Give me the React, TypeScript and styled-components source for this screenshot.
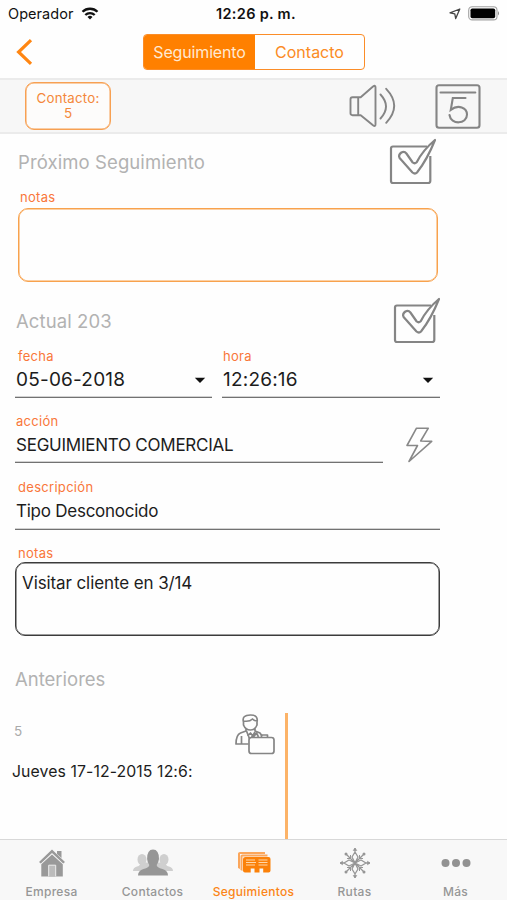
import React from "react";
import styled, { createGlobalStyle } from "styled-components";

const Global = createGlobalStyle`
  * { box-sizing: border-box; }
  body { margin: 0; background: #fff; font-family: Inter, Roboto, sans-serif; }
  button { font: inherit; border: 0; background: none; padding: 0; }
`;

const Screen = styled.div`
  width: 507px; height: 900px; display: flex; flex-direction: column;
  background: #fefefe; overflow: hidden; color: #1c1c1c;
`;

const Txt = styled.span<{ $s: number; $ls?: number; $w?: number; $c?: string }>`
  font-size: ${(p) => p.$s}px;
  letter-spacing: ${(p) => p.$ls ?? 0}px;
  font-weight: ${(p) => p.$w ?? 400};
  color: ${(p) => p.$c ?? "inherit"};
  line-height: 20px;
  white-space: nowrap;
`;

const StatusBar = styled.div`
  height: 27px; display: grid; grid-template-columns: 1fr auto 1fr;
  align-items: center; padding: 0 7px 0 12px; color: #111;
`;
const StatusSide = styled.div<{ $end?: boolean }>`
  display: flex; align-items: center; gap: ${(p) => (p.$end ? 7 : 8)}px;
  margin-left: ${(p) => (p.$end ? 0 : -4)}px;
  justify-content: ${(p) => (p.$end ? "flex-end" : "flex-start")};
`;

const NavBar = styled.nav`
  height: 51px; display: flex; align-items: center; padding-left: 15px;
`;
const BackButton = styled.button`
  width: 128px; height: 32px; display: flex;
`;
const Segmented = styled.div`
  display: flex; width: 222px; height: 36px; margin-bottom: 1px;
  border: 1px solid #fb8d28; border-radius: 4px; overflow: hidden;
`;
const Segment = styled.button<{ $active?: boolean }>`
  width: ${(p) => (p.$active ? 111 : 109)}px; padding-bottom: 1px;
  color: ${(p) => (p.$active ? "#ffe9d2" : "#fb8b24")};
  background: ${(p) => (p.$active ? "#ff8000" : "transparent")};
`;

const Toolbar = styled.div`
  height: 56px; display: flex; align-items: center;
  border-top: 2px solid #ebebeb; border-bottom: 2px solid #ebebeb;
  background: #f7f7f7; padding: 0 26px 0 25px;
`;
const ContactBadge = styled.button`
  width: 86px; height: 48px; border: 1px solid #f7a052; border-radius: 9px;
  box-shadow: inset 0 0 0 0.5px #f7a052;
  background: #fdfcfb; color: #f4883a; margin-right: auto;
  display: flex; flex-direction: column; align-items: center; justify-content: center;
  span { line-height: 15.5px; }
`;
const ToolIcons = styled.div`
  display: flex; align-items: center; gap: 39px;
`;

const Content = styled.main`
  flex: 1; display: flex; flex-direction: column; min-height: 0;
`;
const HeadingRow = styled.div<{ $h: number; $top: number; $left: number; $right: number }>`
  height: ${(p) => p.$h}px; display: flex; align-items: center; justify-content: space-between;
  padding: ${(p) => p.$top}px ${(p) => p.$right}px 0 ${(p) => p.$left}px;
`;
const Label = styled.label<{ $indent?: number; $h?: number }>`
  display: block; height: ${(p) => p.$h ?? 20}px; line-height: 20px;
  font-size: 13px; letter-spacing: 0.3px; flex: none;
  color: #f9773a; padding-left: ${(p) => p.$indent ?? 0}px;
`;
const Notes = styled.div<{ $dark?: boolean }>`
  width: ${(p) => (p.$dark ? 425 : 420)}px; height: 74px; flex: none;
  margin-left: ${(p) => (p.$dark ? 15 : 18)}px;
  border: 1px solid ${(p) => (p.$dark ? "#3c3c3c" : "#f8a24d")};
  box-shadow: inset 0 0 0 0.5px ${(p) => (p.$dark ? "#3c3c3c" : "#f8a24d")};
  border-radius: 10px; padding: 10px 6px;
`;
const FieldRow = styled.div<{ $h: number; $top?: number }>`
  height: ${(p) => p.$h}px; display: flex; gap: 10px; flex: none;
  padding: ${(p) => p.$top ?? 0}px 0 0 15px;
`;
const Field = styled.div<{ $w: number }>`
  width: ${(p) => p.$w}px; display: flex; flex-direction: column;
  border-bottom: 1px solid #727272;
  box-shadow: inset 0 -1px 0 #d2d2d2;
`;
const FieldValue = styled.div`
  display: flex; align-items: center; justify-content: space-between;
  height: 20px; margin-top: 4px; padding: 0 6px 0 1px;
`;
const BoltSlot = styled.div`
  padding: 16px 0 0 12px;
`;
const NotesLabelRow = styled.div`
  padding-top: 13px;
`;
const History = styled.section`
  flex: 1; display: flex;
`;
const HistoryEntry = styled.div`
  width: 288px; border-right: 3px solid #fcb368; display: flex; flex-direction: column;
`;
const HistoryTop = styled.div`
  height: 48px; display: flex; justify-content: space-between; padding: 0 9px 0 14px;
`;
const HistoryNumber = styled.div` padding-top: 7px; `;
const HistoryDate = styled.div` padding-left: 12px; `;

const TabBar = styled.footer`
  height: 61px; border-top: 1px solid #d8d8d8; background: #f8f8f8;
  display: grid; grid-template-columns: 101px 101px 101px 101px 101px; padding-left: 1px;
`;
const Tab = styled.button<{ $active?: boolean }>`
  display: flex; flex-direction: column; align-items: center;
  color: ${(p) => (p.$active ? "#fb8517" : "#969696")};
  padding-top: 5px;
  svg { display: block; height: 36px; flex: none; }
  span { margin-top: 1px; }
`;

const GREY = "#858585";

const Wifi = () => (
  <svg width="18" height="13" viewBox="0 0 17 13" fill="none" stroke="#111" strokeWidth="2.3">
    <path d="M1 4.8a10.7 10.7 0 0 1 15 0" />
    <path d="M3.8 8a6.7 6.7 0 0 1 9.4 0" />
    <path d="M8.5 12.6l-2.5-2.6a3.6 3.6 0 0 1 5 0z" fill="#111" stroke="none" />
  </svg>
);
const Arrow = () => (
  <svg width="12" height="12" viewBox="0 0 12 12" fill="none" stroke="#444" strokeWidth="1.3" strokeLinejoin="round">
    <path d="M10.8 1L1 4.8l4.8 1.1.9 4.7z" />
  </svg>
);
const Battery = () => (
  <svg width="32" height="15" viewBox="0 0 32 15">
    <rect x=".7" y=".7" width="28.3" height="13.2" rx="3.5" fill="none" stroke="#a2a2a2" strokeWidth="1.1" />
    <rect x="2.5" y="2.4" width="24.7" height="9.8" rx="1.8" fill="#000" />
    <path d="M30 5v4.6q2-2.3 0-4.6" fill="#888" />
  </svg>
);
const Back = () => (
  <svg width="20" height="30" viewBox="0 0 20 30" fill="none" stroke="#ff8612" strokeWidth="3.2">
    <path d="M16 3.2L3.6 15 16 26.800" />
  </svg>
);
const Speaker = () => (
  <svg width="47" height="44" viewBox="0 0 47 44" fill="none" stroke={GREY} strokeWidth="1.9" strokeLinecap="round" strokeLinejoin="round">
    <path d="M3.500 13.200h8.200L24 2.500q2.500-1.800 2.500.8v37q0 2.800-2.500 1L11.700 31.200H3.500q-2 0-2-2v-14q0-2 2-2zM9.200 13.200v18" />
    <path d="M31.500 10.500q11 12 0 24M37.200 4.800q16 17 0 34" />
  </svg>
);
const Calendar = () => (
  <svg width="46" height="45" viewBox="0 0 46 45" fill="none" stroke={GREY} strokeWidth="2.1" strokeLinecap="round">
    <rect x="1.500" y="1.200" width="43" height="42.500" rx="2.500" />
    <path d="M5.500 8.500h34.800M30.500 14H17.800l-2 11.800c7.500-5.800 16.200-2 16.200 4.700 0 10.200-16.200 10.500-17.500.5" />
  </svg>
);
const Check = () => (
  <svg width="48" height="47" viewBox="0 0 48 47" fill="none" stroke={GREY} strokeWidth="2.200" strokeLinejoin="round">
    <path d="M38 8.500H4q-2 0-2 2V43q0 2 2 2h35q2.300 0 2.300-2V18" />
    <path d="M46 2Q38 22 28 34.500q-2 2-4.500 0L10.600 20q-1.600-3 1.800-5.500 3-1.500 5 1l6.300 9q2 1.600 4-.3Q34 12 46 2z" />
  </svg>
);
const Caret = () => (
  <svg width="12" height="7" viewBox="0 0 12 7"><path d="M.8.8h10.400L6 6z" fill="#111" /></svg>
);
const Bolt = () => (
  <svg width="28" height="36" viewBox="0 0 28 36" fill="none" stroke="#888" strokeWidth="1.600" strokeLinejoin="round">
    <path d="M11.500 1.200h11.800L15.700 14l11 .4L4 34.500l8.500-16H2z" />
  </svg>
);
const Salesman = () => (
  <svg width="42" height="42" viewBox="0 0 41 42" fill="none" stroke={GREY} strokeWidth="1.700" strokeLinejoin="round">
    <path d="M9 9q-2-7 7-7 8 0 6.500 7v3q-2 5-6.500 5-5 0-7-5zM9 8q6 1 9-2 2 2 5 2M11.500 15v3L6 20q-4.500 2-4.500 11H14M20.500 15v3l5 2 2 3M7 23v8" />
    <path d="M12 18l3.500 9 5-8M13 23l3-3 3 4 3-4 2 4M27 24v-2h6v3" />
    <rect x="14.500" y="24.500" width="25" height="16" rx="2.500" fill="#fefefe" />
  </svg>
);
const House = () => (
  <svg width="30" height="36" viewBox="0 0 30 36" fill="#999">
    <path d="M2 17L15 4.500 28 17l-1.800 1.500L15 8 3.800 18.500z" />
    <path d="M20 6h4.500v7L20 9z" />
    <path d="M4.300 19.200L15 9.500l10.800 9.700v12.200H4.300z" />
    <path d="M11.700 31.400V20.200h7v11.200" fill="#bbb" stroke="#ededed" strokeWidth="1" />
  </svg>
);
const People = () => (
  <svg width="42" height="36" viewBox="0 0 42 36">
    <g fill="#cfcfcf">
      <ellipse cx="10" cy="14.500" rx="4.500" ry="5.500" /><ellipse cx="32" cy="14.500" rx="4.500" ry="5.500" />
      <path d="M1 26q0-3.500 4-4.500 4-1 3-4h26q-1 3 3 4t4 4.500z" />
    </g>
    <path d="M6 30.500q0-5 5.500-6.500 5.800-1.500 5.800-4-1.900-2.500-2.200-6Q15 4.500 21 4.500t6 9.500q-.4 3.500-2.300 6 0 2.500 5.800 4 5.500 1.500 5.500 6.500z" fill="#969696" />
  </svg>
);
const Cards = () => (
  <svg width="34" height="36" viewBox="0 0 34 36">
    <path d="M1 23V8.500Q1 7 3 7h25v2H3v15zM3.500 25V11q0-1.500 2-1.500h25v2h-25V26z" fill="#fba65b" />
    <path d="M8.500 12h23q2 0 2 2v11.500q0 2-2 2h-5.300v-4h-3.700v4h-5v-4h-3.800v4H8q-2 0-2-2V14q0-2 2.500-2z" fill="#fb8109" />
    <path d="M9 15h9M9 17.500h10M9 20h9M21.500 15h9M21.500 17.500h9M21.500 20h9" stroke="#ffd7a8" strokeWidth="1" />
  </svg>
);
const Snow = () => (
  <svg width="32" height="36" viewBox="0 0 32 36" fill="none" stroke="#969696" strokeWidth="1.300" strokeLinejoin="round">
    {[0, 90, 180, 270].map((a) => (
      <g key={a} transform={`rotate(${a} 16 18)`}>
        <path d="M16 18l-3-6 3-5 3 5zM16 7V3M16 18l8.500-8.500" />
        <path d="M14.200 5.500L16 3l1.800 2.500z" fill="#969696" strokeWidth=".6" />
        <path d="M20.500 10v3.500H24" strokeWidth="1" />
        <circle cx="25" cy="9" r="1.500" fill="#969696" stroke="none" />
      </g>
    ))}
  </svg>
);
const Dots = () => (
  <svg width="30" height="36" viewBox="0 0 30 36" fill="#929292">
    <circle cx="4.500" cy="18" r="4" /><circle cx="15" cy="18" r="4" /><circle cx="25.500" cy="18" r="4" />
  </svg>
);

const tabs = [
  { name: "Empresa", icon: <House /> },
  { name: "Contactos", icon: <People /> },
  { name: "Seguimientos", icon: <Cards />, active: true },
  { name: "Rutas", icon: <Snow /> },
  { name: "Más", icon: <Dots /> },
];

export default function App() {
  return (
    <Screen>
      <Global />
      <StatusBar>
        <StatusSide><Txt $s={14.5} $ls={0.05}>Operador</Txt><Wifi /></StatusSide>
        <Txt $s={14.5} $w={600} $ls={0.3}>12:26 p. m.</Txt>
        <StatusSide $end><Arrow /><Battery /></StatusSide>
      </StatusBar>
      <NavBar>
        <BackButton aria-label="Atrás"><Back /></BackButton>
        <Segmented>
          <Segment $active><Txt $s={16} $ls={-0.15}>Seguimiento</Txt></Segment>
          <Segment><Txt $s={16}>Contacto</Txt></Segment>
        </Segmented>
      </NavBar>
      <Toolbar>
        <ContactBadge>
          <Txt $s={13.3} $ls={0.2}>Contacto:</Txt>
          <Txt $s={13.5}>5</Txt>
        </ContactBadge>
        <ToolIcons><Speaker /><Calendar /></ToolIcons>
      </Toolbar>
      <Content>
        <HeadingRow $h={53} $top={2} $left={18} $right={70}>
          <Txt $s={18.5} $ls={0.1} $c="#b2b2b2">Próximo Seguimiento</Txt><Check />
        </HeadingRow>
        <Label $indent={20} $h={21}>notas</Label>
        <Notes />
        <HeadingRow $h={64} $top={13} $left={16} $right={66}>
          <Txt $s={18.5} $ls={0.1} $c="#b2b2b2">Actual 203</Txt><Check />
        </HeadingRow>
        <FieldRow $h={52}>
          <Field $w={197}>
            <Label $indent={3}>fecha</Label>
            <FieldValue><Txt $s={19} $ls={0.2}>05-06-2018</Txt><Caret /></FieldValue>
          </Field>
          <Field $w={218}>
            <Label $indent={1}>hora</Label>
            <FieldValue><Txt $s={19} $ls={0.2}>12:26:16</Txt><Caret /></FieldValue>
          </Field>
        </FieldRow>
        <FieldRow $h={65} $top={13}>
          <Field $w={368}>
            <Label $indent={1}>acción</Label>
            <FieldValue><Txt $s={17} $ls={-0.24}>SEGUIMIENTO COMERCIAL</Txt></FieldValue>
          </Field>
          <BoltSlot><Bolt /></BoltSlot>
        </FieldRow>
        <FieldRow $h={67} $top={14}>
          <Field $w={425}>
            <Label $indent={3}>descripción</Label>
            <FieldValue><Txt $s={17} $ls={-0.25}>Tipo Desconocido</Txt></FieldValue>
          </Field>
        </FieldRow>
        <NotesLabelRow><Label $indent={18} $h={19}>notas</Label></NotesLabelRow>
        <Notes $dark><Txt $s={17} $ls={-0.1}>Visitar cliente en 3/14</Txt></Notes>
        <HeadingRow $h={77} $top={8} $left={15} $right={70}>
          <Txt $s={18.5} $c="#b2b2b2">Anteriores</Txt>
        </HeadingRow>
        <History>
          <HistoryEntry>
            <HistoryTop>
              <HistoryNumber><Txt $s={13.5} $c="#aaa">5</Txt></HistoryNumber>
              <Salesman />
            </HistoryTop>
            <HistoryDate><Txt $s={15.8} $ls={0.1}>Jueves 17-12-2015 12:6:</Txt></HistoryDate>
          </HistoryEntry>
        </History>
      </Content>
      <TabBar>
        {tabs.map((t) => (
          <Tab key={t.name} $active={t.active}>
            {t.icon}
            <Txt $s={12} $w={500} $ls={0.3}>{t.name}</Txt>
          </Tab>
        ))}
      </TabBar>
    </Screen>
  );
}
